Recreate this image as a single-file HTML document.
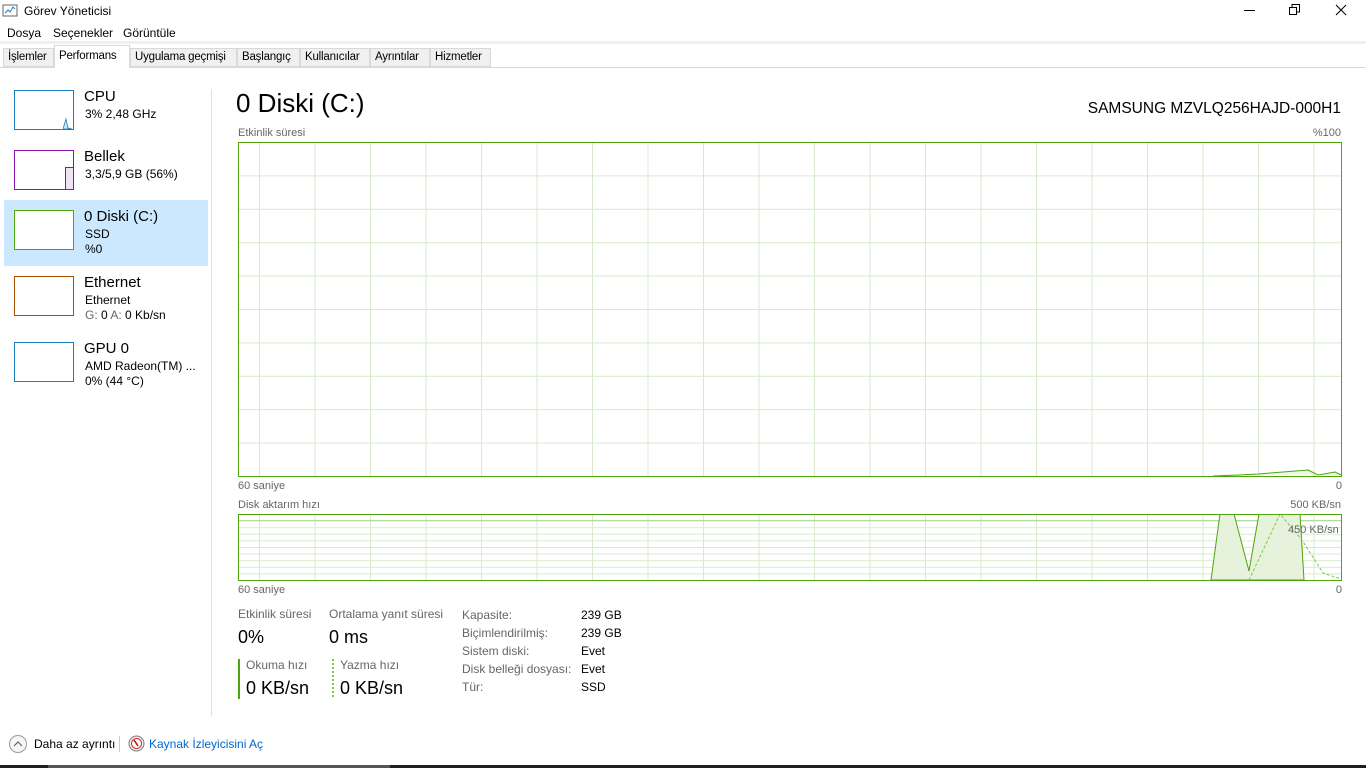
<!DOCTYPE html>
<html><head><meta charset="utf-8"><style>
*{margin:0;padding:0;box-sizing:border-box}
body{width:1366px;height:768px;background:#fff;font-family:"Liberation Sans",sans-serif;position:relative;overflow:hidden;color:#000}
.a{position:absolute;white-space:nowrap}
.s12{font-size:12px}.s11{font-size:11px}
.g{color:#666}
.tab{position:absolute;top:48px;height:19px;border:1px solid #d9d9d9;background:#f0f0f0;font-size:11.5px;padding:2px 0 0 4px;white-space:nowrap;overflow:hidden;letter-spacing:-0.2px}
.thumb{position:absolute;left:14px;width:60px;height:40px;border:1px solid;background:#fff}
</style></head><body>
<svg class="a" style="left:2px;top:4px" width="16" height="14"><rect x="1" y="1" width="14" height="11" fill="#fff" stroke="#666"/><polyline points="3,9 6,6 8,8 11,3 13,5" fill="none" stroke="#2a7ab8"/></svg>
<div class="a s12" style="left:24px;top:4px">Görev Yöneticisi</div>
<div class="a" style="left:1244px;top:10px;width:11px;height:1px;background:#000"></div>
<svg class="a" style="left:1289px;top:4px" width="12" height="12"><rect x="0.5" y="3.5" width="7" height="7" fill="none" stroke="#000"/><polyline points="3,3.5 3,0.5 10.5,0.5 10.5,8 8,8" fill="none" stroke="#000"/></svg>
<svg class="a" style="left:1335px;top:4px" width="12" height="12"><path d="M1 1L11 11M11 1L1 11" stroke="#000"/></svg>
<div class="a s12" style="left:7px;top:26px">Dosya</div>
<div class="a s12" style="left:53px;top:26px">Seçenekler</div>
<div class="a s12" style="left:123px;top:26px">Görüntüle</div>
<div class="a" style="left:0;top:41px;width:1366px;height:3px;background:#f0f0f0"></div>
<div class="a" style="left:0;top:67px;width:1366px;height:1px;background:#d9d9d9"></div>
<div class="tab" style="left:3px;width:51px">İşlemler</div>
<div class="tab" style="left:54px;top:45px;height:23px;width:76px;background:#fff;border-bottom:none;padding-top:4px">Performans</div>
<div class="tab" style="left:130px;width:107px">Uygulama geçmişi</div>
<div class="tab" style="left:237px;width:63px">Başlangıç</div>
<div class="tab" style="left:300px;width:70px">Kullanıcılar</div>
<div class="tab" style="left:370px;width:60px">Ayrıntılar</div>
<div class="tab" style="left:430px;width:61px">Hizmetler</div>

<div class="a" style="left:211px;top:89px;width:1px;height:627px;background:#e0e0e0"></div>
<div class="a" style="left:4px;top:200px;width:204px;height:66px;background:#cce8ff"></div>
<div class="thumb" style="top:90px;border-color:#1a7dc0"></div>
<svg class="a" style="left:63px;top:115px" width="10" height="15"><path d="M0 14L3 4L5 13L9 14Z" fill="#cfe6f5" stroke="#1a7dc0" stroke-width=".8"/></svg>
<div class="thumb" style="top:150px;border-color:#8b12ae"></div>
<div class="a" style="left:65px;top:167px;width:8px;height:22px;background:#f0e3f5;border-left:1px solid #8b12ae;border-top:1px solid #8b12ae"></div>
<div class="thumb" style="top:210px;border-color:#4da60c"></div>
<div class="thumb" style="top:276px;border-color:#a74f01"></div>
<div class="thumb" style="top:342px;border-color:#1a7dc0"></div>
<div class="a" style="left:84px;top:88px;font-size:15px">CPU</div>
<div class="a s12" style="left:85px;top:107px">3% 2,48 GHz</div>
<div class="a" style="left:84px;top:148px;font-size:15px">Bellek</div>
<div class="a s12" style="left:85px;top:167px">3,3/5,9 GB (56%)</div>
<div class="a" style="left:84px;top:208px;font-size:15px">0 Diski (C:)</div>
<div class="a s12" style="left:85px;top:227px">SSD</div>
<div class="a s12" style="left:85px;top:242px">%0</div>
<div class="a" style="left:84px;top:274px;font-size:15px">Ethernet</div>
<div class="a s12" style="left:85px;top:293px">Ethernet</div>
<div class="a s12" style="left:85px;top:308px"><span class="g">G:</span> 0 <span class="g">A:</span> 0 Kb/sn</div>
<div class="a" style="left:84px;top:340px;font-size:15px">GPU 0</div>
<div class="a s12" style="left:85px;top:359px">AMD Radeon(TM) ...</div>
<div class="a s12" style="left:85px;top:374px">0% (44 °C)</div>

<div class="a" style="left:236px;top:88px;font-size:26px">0 Diski (C:)</div>
<div class="a" style="right:25px;top:100px;font-size:15.5px">SAMSUNG MZVLQ256HAJD-000H1</div>
<div class="a s11 g" style="left:238px;top:127px">Etkinlik süresi</div>
<div class="a s11 g" style="right:25px;top:127px">%100</div>
<svg class="a" style="left:238px;top:142px" width="1104" height="335">
<defs><pattern id="p" x="21" y="0" width="55.5" height="33.4" patternUnits="userSpaceOnUse"><path d="M0.5 0V33.4M0 0.5H55.5" stroke="#d9eacb" fill="none"/></pattern></defs>
<rect x="0" y="0" width="1104" height="335" fill="url(#p)"/>
<polyline points="975,334 1000,333 1020,332 1045,330 1070,328 1080,333 1097,330 1103,333" fill="#eef6e6" stroke="#4da60c"/>
<rect x="0.5" y="0.5" width="1103" height="334" fill="none" stroke="#4da60c"/>
</svg>
<div class="a s11 g" style="left:238px;top:480px">60 saniye</div>
<div class="a s11 g" style="right:24px;top:480px">0</div>
<div class="a s11 g" style="left:238px;top:499px">Disk aktarım hızı</div>
<div class="a s11 g" style="right:25px;top:499px">500 KB/sn</div>
<svg class="a" style="left:238px;top:514px" width="1104" height="67">
<defs><pattern id="q" x="21" y="0" width="55.5" height="6.6" patternUnits="userSpaceOnUse"><path d="M0.5 0V6.6M0 0.5H55.5" stroke="#d9eacb" fill="none"/></pattern></defs>
<rect width="1104" height="67" fill="url(#q)"/>
<line x1="0" y1="6.6" x2="1104" y2="6.6" stroke="#aed68c"/>
<polygon points="973,66 982,0 996,0 1011,57 1021,0 1062,0 1066,66" fill="#e6f2dc" stroke="#4da60c"/>
<polyline points="1011,66 1042,0 1064,26 1085,59 1103,65" fill="none" stroke="#7ac943" stroke-dasharray="3,2"/>
<rect x="0.5" y="0.5" width="1103" height="66" fill="none" stroke="#4da60c"/>
</svg>
<div class="a s11 g" style="left:1288px;top:524px">450 KB/sn</div>
<div class="a s11 g" style="left:238px;top:584px">60 saniye</div>
<div class="a s11 g" style="right:24px;top:584px">0</div>

<div class="a s12 g" style="left:238px;top:607px">Etkinlik süresi</div>
<div class="a" style="left:238px;top:627px;font-size:18px">0%</div>
<div class="a s12 g" style="left:329px;top:607px">Ortalama yanıt süresi</div>
<div class="a" style="left:329px;top:627px;font-size:18px">0 ms</div>
<div class="a" style="left:238px;top:659px;width:2px;height:40px;background:#4da60c"></div>
<div class="a s12 g" style="left:246px;top:658px">Okuma hızı</div>
<div class="a" style="left:246px;top:678px;font-size:18px">0 KB/sn</div>
<div class="a" style="left:332px;top:659px;width:2px;height:40px;background:repeating-linear-gradient(#7ac943 0 2px,transparent 2px 4px)"></div>
<div class="a s12 g" style="left:340px;top:658px">Yazma hızı</div>
<div class="a" style="left:340px;top:678px;font-size:18px">0 KB/sn</div>
<div class="a s12 g" style="left:462px;top:606px;line-height:18px">Kapasite:<br>Biçimlendirilmiş:<br>Sistem diski:<br>Disk belleği dosyası:<br>Tür:</div>
<div class="a s12" style="left:581px;top:606px;line-height:18px">239 GB<br>239 GB<br>Evet<br>Evet<br>SSD</div>

<svg class="a" style="left:8px;top:734px" width="20" height="20"><circle cx="10" cy="10" r="8.5" fill="#f6f6f6" stroke="#999"/><polyline points="6,12 10,8 14,12" fill="none" stroke="#666" stroke-width="1.2"/></svg>
<div class="a s12" style="left:34px;top:737px">Daha az ayrıntı</div>
<div class="a" style="left:119px;top:736px;width:1px;height:16px;background:#ccc"></div>
<svg class="a" style="left:128px;top:735px" width="17" height="17"><circle cx="8.5" cy="8.5" r="7.5" fill="#eee" stroke="#777"/><circle cx="8.5" cy="8.5" r="5" fill="#fff" stroke="#c33"/><path d="M6 5L10 11" stroke="#c00" stroke-width="1.5"/></svg>
<div class="a s12" style="left:149px;top:737px;color:#0066cc">Kaynak İzleyicisini Aç</div>
<div class="a" style="left:0;top:765px;width:1366px;height:3px;background:#1f1f1f"></div>
<div class="a" style="left:48px;top:765px;width:342px;height:3px;background:#555"></div>
</body></html>
